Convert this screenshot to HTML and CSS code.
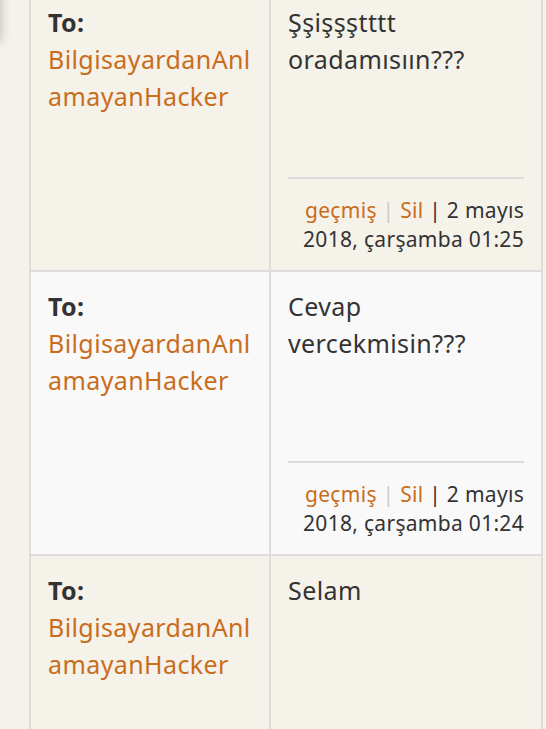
FILE: index.html
```html
<!DOCTYPE html>
<html lang="tr">

<head>
  <meta charset="UTF-8">
  <meta name="viewport" content="width=device-width, initial-scale=1.0">
  <title>Mesajlar</title>
  <link rel="stylesheet" href="styles.css">
</head>

<body>

  <div class="side-shadow"></div>

  <div class="container">
    <table class="messages">
      <tr class="row-odd">
        <td class="to-cell">
          <b>To:</b><br>
          <a href="#">BilgisayardanAnlamayanHacker</a>
        </td>
        <td class="msg-cell">
          <div class="msg-text">Şşişşştttt oradamısıın???</div>
          <div class="msg-meta">
            <a href="#">geçmiş</a> <span class="sep-light">|</span> <a href="#">Sil</a> | 2 mayıs 2018, çarşamba 01:25
          </div>
        </td>
      </tr>
      <tr class="row-even">
        <td class="to-cell">
          <b>To:</b><br>
          <a href="#">BilgisayardanAnlamayanHacker</a>
        </td>
        <td class="msg-cell">
          <div class="msg-text">Cevap vercekmisin???</div>
          <div class="msg-meta">
            <a href="#">geçmiş</a> <span class="sep-light">|</span> <a href="#">Sil</a> | 2 mayıs 2018, çarşamba 01:24
          </div>
        </td>
      </tr>
      <tr class="row-odd">
        <td class="to-cell">
          <b>To:</b><br>
          <a href="#">BilgisayardanAnlamayanHacker</a>
        </td>
        <td class="msg-cell">
          <div class="msg-text">Selam</div>
          <div class="msg-meta">
            <a href="#">geçmiş</a> <span class="sep-light">|</span> <a href="#">Sil</a> | 2 mayıs 2018, çarşamba 01:20
          </div>
        </td>
      </tr>
    </table>
  </div>

</body>

</html>
```

FILE: styles.css
```css
body,
html {
  margin: 0;
  font-family: "Noto Sans", "Open Sans", sans-serif;
  background-color: #f4f2eb;
  color: #333;
  overflow: hidden;
}

.side-shadow {
  position: absolute;
  top: -20px;
  left: -20px;
  width: 20px;
  height: 62px;
  background: #f4f2eb;
  box-shadow: 0 0 12px rgba(0, 0, 0, 0.25);
}

.container {
  padding-left: 29px;
  padding-right: 3px;
  margin-top: -14px;
}

.messages {
  width: 100%;
  border-collapse: collapse;
  table-layout: fixed;
}

.messages td {
  border: 2px solid #dedddb;
  vertical-align: top;
  padding: 16px 17px 16px 17px;
}

.row-odd {
  background-color: #f5f2ea;
}

.row-even {
  background-color: #f9f9f9;
}

.to-cell {
  width: 204px;
  font-size: 25px;
  line-height: 37px;
  letter-spacing: 0.4px;
  word-break: break-all;
}

.to-cell b {
  font-weight: bold;
}

a {
  color: #c96d1c;
  text-decoration: none;
}

.msg-text {
  font-size: 25px;
  line-height: 37px;
  letter-spacing: 0.4px;
  min-height: 173px;
}

.msg-meta {
  border-top: 2px solid #dcdcdc;
  padding-top: 17px;
  font-size: 21px;
  line-height: 29px;
  letter-spacing: 0.3px;
  text-align: right;
}

.sep-light {
  color: #ccc;
}
```
